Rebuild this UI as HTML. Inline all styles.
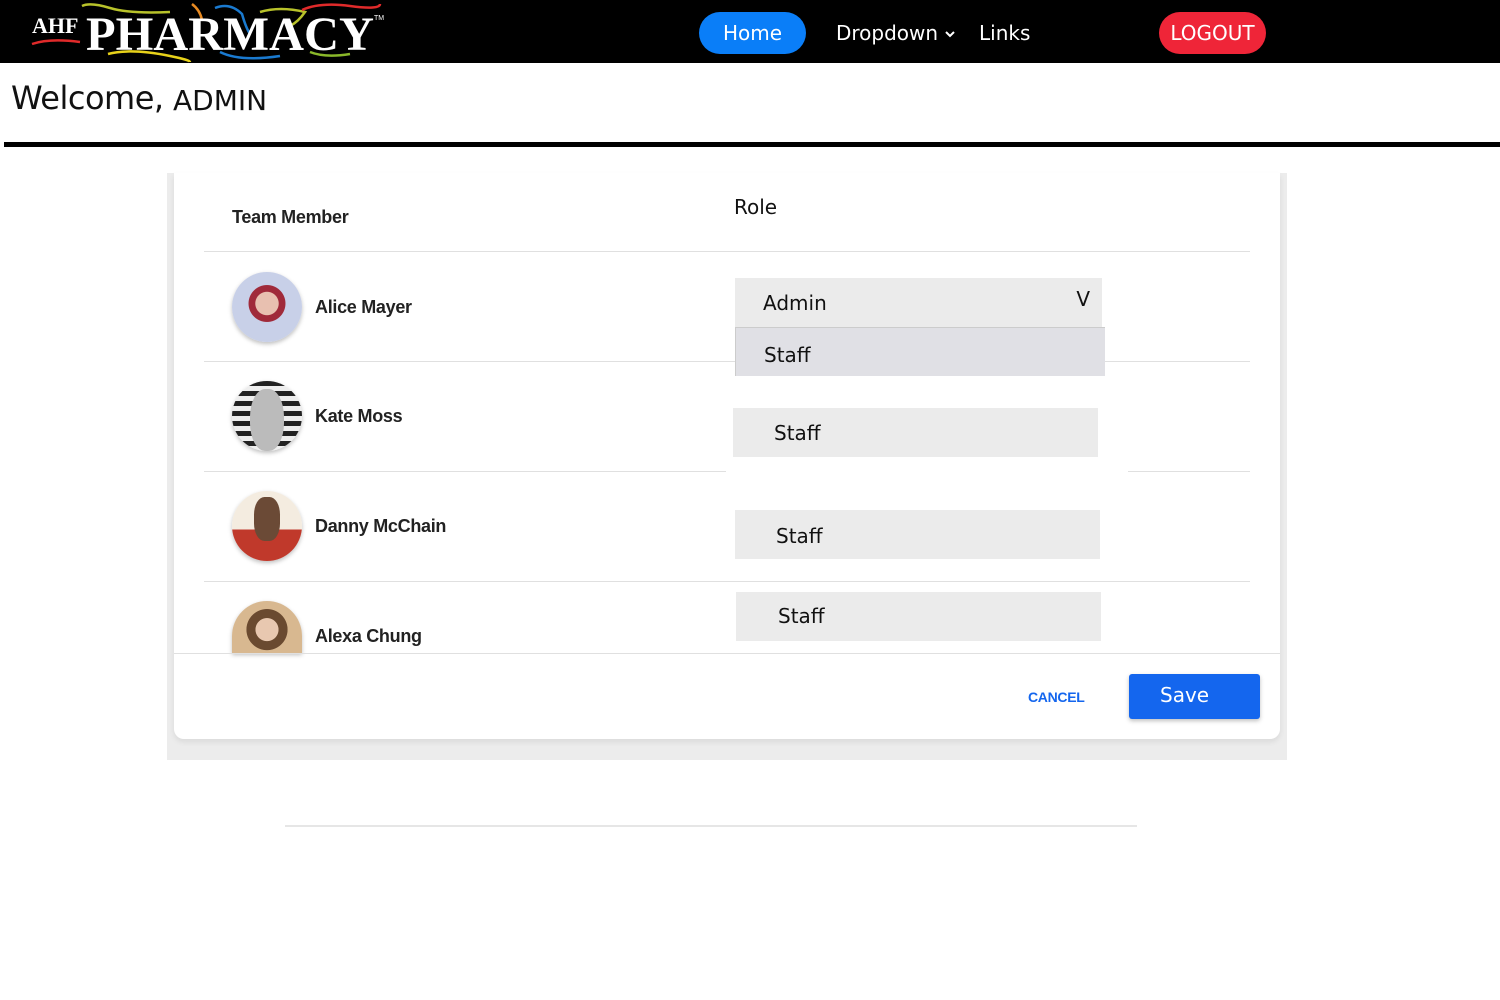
<!DOCTYPE html>
<html><head><meta charset="utf-8"><style>
*{margin:0;padding:0;box-sizing:border-box}
body{width:1500px;height:1000px;background:#fff;position:relative;overflow:hidden;font-family:"Liberation Sans",sans-serif}
.a{position:absolute}
.nav{left:0;top:0;width:1500px;height:63px;background:#000}
.pill{border-radius:21px;height:42px;top:12px;color:#fff;font-family:"DejaVu Sans",sans-serif;font-size:20px;line-height:42px;text-align:center}
.nl{color:#fff;font-family:"DejaVu Sans",sans-serif;font-size:20px;top:21px}
.line{height:1px;background:#e0e0e0}
.name{font-family:"Liberation Sans",sans-serif;font-size:18px;color:#222;font-weight:bold;letter-spacing:-0.3px}
.sel{background:#ebebeb;font-family:"DejaVu Sans",sans-serif;font-size:20px;color:#111}
.av{width:70px;height:70px;border-radius:50%;overflow:hidden;box-shadow:0 2px 4px rgba(0,0,0,.25)}
</style></head><body>
<div class="a nav"></div>
<svg class="a" style="left:20px;top:0" width="370" height="63" viewBox="0 0 370 63">
<path d="M62 6 Q70 2 90 8 T150 12" stroke="#b8c22a" stroke-width="2.5" fill="none"/>
<path d="M172 4 Q180 10 182 20" stroke="#e88a22" stroke-width="2.5" fill="none"/>
<path d="M195 8 Q210 2 222 14 Q226 28 230 34" stroke="#1a7ad0" stroke-width="2.5" fill="none"/>
<path d="M240 12 Q260 6 285 12 Q278 22 270 26" stroke="#b8c22a" stroke-width="2.5" fill="none"/>
<path d="M282 10 Q300 2 330 6 T360 4" stroke="#e02a2a" stroke-width="2.5" fill="none"/>
<path d="M12 44 Q30 38 60 42" stroke="#e02a2a" stroke-width="2.5" fill="none"/>
<path d="M88 54 Q110 48 150 56 Q170 60 170 62" stroke="#e8d21a" stroke-width="2.5" fill="none"/>
<path d="M200 52 Q220 62 260 56" stroke="#1a7ad0" stroke-width="2.5" fill="none"/>
<path d="M290 52 Q305 58 330 54" stroke="#8ab82a" stroke-width="2.5" fill="none"/>
<text x="12" y="33" fill="#fff" font-family="Liberation Serif,serif" font-size="22" font-weight="bold">AHF</text>
<text x="66" y="50" fill="#fff" font-family="Liberation Serif,serif" font-size="48" font-weight="bold" textLength="288" lengthAdjust="spacingAndGlyphs">PHARMACY</text>
<text x="354" y="20" fill="#fff" font-size="7">TM</text>
</svg>
<div class="a pill" style="left:699px;width:107px;background:#0a7ef8">Home</div>
<div class="a nl" style="left:836px">Dropdown</div>
<svg class="a" style="left:944px;top:29px" width="12" height="10" viewBox="0 0 12 10"><path d="M2 3 L6 7 L10 3" stroke="#fff" stroke-width="2" fill="none"/></svg>
<div class="a nl" style="left:979px">Links</div>
<div class="a pill" style="left:1159px;width:107px;background:#ef2538">LOGOUT</div>
<div class="a" style="left:11px;top:79px;font-family:'DejaVu Sans',sans-serif;font-size:32px;color:#111;letter-spacing:-0.5px">Welcome,</div>
<div class="a" style="left:173px;top:84px;font-family:'DejaVu Sans',sans-serif;font-size:28px;color:#111">ADMIN</div>
<div class="a" style="left:4px;top:142px;width:1496px;height:5px;background:#000"></div>

<div class="a" style="left:167px;top:173px;width:1120px;height:587px;background:#ececec"></div>
<div class="a" style="left:174px;top:173px;width:1106px;height:566px;background:#fff;border-radius:0 0 10px 10px;box-shadow:0 3px 6px rgba(0,0,0,.08)"></div>

<div class="a name" style="left:232px;top:207px;font-weight:600;color:#222">Team Member</div>
<div class="a" style="left:734px;top:195px;font-family:'DejaVu Sans',sans-serif;font-size:20px;color:#111">Role</div>
<div class="a line" style="left:204px;top:251px;width:1046px"></div>
<div class="a line" style="left:204px;top:361px;width:1046px"></div>
<div class="a line" style="left:204px;top:471px;width:522px"></div>
<div class="a line" style="left:1128px;top:471px;width:122px"></div>
<div class="a line" style="left:204px;top:581px;width:1046px"></div>

<div class="a av" style="left:232px;top:272px;background:radial-gradient(circle at 50% 45%,#e8c0b0 0 22%,#a02a3a 23% 35%,#c8d0e8 36%)"></div>
<div class="a av" style="left:232px;top:381px;background:repeating-linear-gradient(#222 0 5px,#eee 5px 10px)"><div style="margin:8px auto;width:34px;height:62px;border-radius:45%;background:#bbb"></div></div>
<div class="a av" style="left:232px;top:491px;background:linear-gradient(#f4ece0 0 55%,#c0392b 55%)"><div style="margin:6px auto;width:26px;height:44px;border-radius:40%;background:#6b4a36"></div></div>
<div class="a av" style="left:232px;top:601px;height:52px;border-radius:35px 35px 0 0;background:radial-gradient(circle at 50% 55%,#e8c8b0 0 25%,#6a4a30 26% 45%,#d8b890 46%)"></div>

<div class="a name" style="left:315px;top:297px">Alice Mayer</div>
<div class="a name" style="left:315px;top:406px">Kate Moss</div>
<div class="a name" style="left:315px;top:516px">Danny McChain</div>
<div class="a name" style="left:315px;top:626px">Alexa Chung</div>

<div class="a sel" style="left:735px;top:278px;width:367px;height:49px;padding:13px 0 0 28px">Admin<span style="position:absolute;right:12px;top:9px">V</span></div>
<div class="a sel" style="left:735px;top:327px;width:370px;height:49px;background:#e0e0e5;border-top:1px solid #ccc;border-left:1px solid #ccc;padding:15px 0 0 28px">Staff</div>
<div class="a sel" style="left:733px;top:408px;width:365px;height:49px;padding:13px 0 0 41px">Staff</div>
<div class="a sel" style="left:735px;top:510px;width:365px;height:49px;padding:14px 0 0 41px">Staff</div>
<div class="a sel" style="left:736px;top:592px;width:365px;height:49px;padding:12px 0 0 42px">Staff</div>

<div class="a line" style="left:174px;top:653px;width:1106px"></div>
<div class="a" style="left:1028px;top:689px;font-size:14px;color:#1466ee;font-weight:bold;letter-spacing:-.3px">CANCEL</div>
<div class="a" style="left:1129px;top:674px;width:131px;height:45px;background:#1466ee;border-radius:3px;box-shadow:0 2px 4px rgba(0,0,0,.25);color:#fff;font-family:'DejaVu Sans',sans-serif;font-size:20px;padding:9px 0 0 31px">Save</div>
<div class="a" style="left:285px;top:825px;width:852px;height:2px;background:#e6e6e6"></div>
</body></html>
